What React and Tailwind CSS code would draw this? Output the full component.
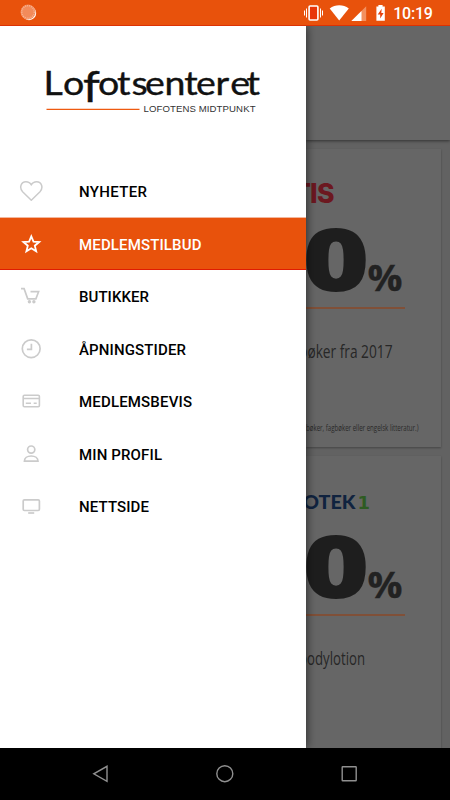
import React from "react";

function HeartIcon() {
  return (
    <svg width="24" height="24" viewBox="0 0 24 24" fill="none" stroke="#cbcbcb" strokeWidth="1.500" strokeLinejoin="round">
      <path d="M12.300 21.300 3.600 12.700C0 8.900 1.900 2.700 6.900 2.700c2.500 0 4.400 1.200 5.400 3.300 1-2.100 2.900-3.300 5.400-3.300 5 0 6.900 6.200 3.300 10Z" />
    </svg>
  );
}

function StarIcon() {
  return (
    <svg width="24" height="24" viewBox="0 0 24 24" fill="none" stroke="#fff" strokeWidth="1.800">
      <path d="m12.300 4.300 2.200 5.300 5.700.4-4.400 3.700 1.400 5.600-4.900-3-4.900 3 1.400-5.600-4.400-3.700 5.700-.4Z" />
    </svg>
  );
}

function CartIcon() {
  return (
    <svg width="24" height="24" viewBox="0 0 24 24" fill="none" stroke="#cbcbcb" strokeWidth="1.700">
      <path d="M2 4.600h3.100l3.600 10.300h8.200l2.700-7.200h-8.100" />
      <circle cx="10.400" cy="17.700" r="1.700" fill="#cbcbcb" stroke="none" />
      <circle cx="14.900" cy="17.700" r="1.700" fill="#cbcbcb" stroke="none" />
    </svg>
  );
}

function ClockIcon() {
  return (
    <svg width="24" height="24" viewBox="0 0 24 24" fill="none" stroke="#cbcbcb" strokeWidth="1.700">
      <circle cx="12.200" cy="11.700" r="8.900" />
      <path d="M12.400 6.800v5.500H7.900" />
    </svg>
  );
}

function CardIcon() {
  return (
    <svg width="24" height="24" viewBox="0 0 24 24" fill="none" stroke="#cbcbcb" strokeWidth="1.600">
      <rect x="4.200" y="6.200" width="16.200" height="11.600" rx="1.200" />
      <path d="M4.200 9.500h16.200M6.800 14.200h5.200M14.700 14.200h3" />
    </svg>
  );
}

function PersonIcon() {
  return (
    <svg width="24" height="24" viewBox="0 0 24 24" fill="none" stroke="#cbcbcb" strokeWidth="1.700">
      <circle cx="12.200" cy="7.600" r="3.600" />
      <path d="M5.400 19.200c0-3 2.900-5.200 6.800-5.200s6.800 2.200 6.800 5.200Z" />
    </svg>
  );
}

function ScreenIcon() {
  return (
    <svg width="24" height="24" viewBox="0 0 24 24" fill="none" stroke="#cbcbcb" strokeWidth="1.700">
      <rect x="4.200" y="5.900" width="16.200" height="10.600" rx="1.200" />
      <path d="M9.200 19h6" />
    </svg>
  );
}

const items = [
  { label: "NYHETER", width: 68, Icon: HeartIcon },
  { label: "MEDLEMSTILBUD", width: 122.5, Icon: StarIcon, active: true },
  { label: "BUTIKKER", width: 70, Icon: CartIcon },
  { label: "ÅPNINGSTIDER", width: 107, Icon: ClockIcon },
  { label: "MEDLEMSBEVIS", width: 113, Icon: CardIcon },
  { label: "MIN PROFIL", width: 83, Icon: PersonIcon },
  { label: "NETTSIDE", width: 70, Icon: ScreenIcon },
];

function StatusBar() {
  return (
    <header className="flex h-[26px] shrink-0 items-center border-b border-[#dc3204] bg-[#e8520c]">
      <svg className="ml-[20px]" width="17" height="17" viewBox="0 0 17 17">
        <circle cx="9" cy="9" r="7.200" fill="#fff" />
        <circle cx="8" cy="8" r="7.500" fill="#f28b5b" />
        <circle cx="8" cy="8" r="6.300" fill="none" stroke="#f7b394" strokeWidth="1.600" strokeDasharray="1 1" />
      </svg>
      <svg className="ml-auto" width="84" height="22" viewBox="303 2 84 22">
        <rect x="309.100" y="6" width="8.800" height="14" rx="1" fill="#e8350a" stroke="#fff" strokeWidth="1.600" />
        <path d="M304.500 10.500v5M306.500 8.500v9M320.500 8.500v9M322.500 10.500v5" stroke="#fff" strokeWidth="1" />
        <path d="M339.200 20.600 329.700 8.500c5.500-4.300 13.600-4.300 19.100 0Z" fill="#fff" />
        <path d="M366.200 6.200V21h-14.800Z" fill="#f3905f" />
        <path d="M361.500 10.900V21h-10.100Z" fill="#fff" />
        <path d="M376.400 6.600h2V5h4.200v1.600h2.200v14.200h-8.400Z" fill="#fff" />
        <path d="m381.700 8.800-4 5.600h2.500v4.200l3.400-5.500h-2.300Z" fill="#e8400a" />
      </svg>
      <svg className="mr-[16px] ml-[6px] font-[Roboto,sans-serif] text-[16px] font-medium" width="41" height="18">
        <text x="0.300" y="15.200" textLength="39.500" fill="#fff">10:19</text>
      </svg>
    </header>
  );
}

function Logo() {
  return (
    <svg className="ml-[42px] mt-[38px] block shrink-0" width="222" height="54" viewBox="42 64 222 54">
      <g transform="translate(42 0) scale(1.120 1)" fontFamily="Lato, sans-serif" fontSize="33.500" fill="#111" stroke="#111" strokeWidth="0.400">
        <text>
          <tspan x="1.300 18.800" y="95.500">Lo</tspan>
          <tspan x="36.600" y="102.500" fontSize="43">f</tspan>
          <tspan x="50 67 80 92 109.300 127 137.500 155 168 182.500" y="95.500">otsenteret</tspan>
        </text>
      </g>
      <path d="M46.500 109.300h93" stroke="#ee5a10" strokeWidth="1.300" />
      <text x="143.500" y="112" fontFamily="Liberation Sans, sans-serif" fontSize="9.600" fill="#333" textLength="112">
        LOFOTENS MIDTPUNKT
      </text>
    </svg>
  );
}

function Drawer() {
  return (
    <aside className="z-10 flex w-[306px] shrink-0 flex-col bg-white shadow-[1px_0_9px_rgba(0,0,0,0.55)]">
      <Logo />
      <nav className="mt-[47px] flex flex-col">
        {items.map(({ label, width, Icon, active }) => (
          <a
            key={label}
            className={
              active
                ? "flex h-[52.470px] items-center border-t border-b border-t-[#f3b79d] border-b-[#e01b02] bg-[#e8520c] pl-[18.500px] text-white"
                : "flex h-[52.470px] items-center pl-[18.500px] text-black"
            }
          >
            <Icon />
            <svg className="ml-[36.500px] font-[Roboto,sans-serif] text-[15px] font-medium" width="150" height="22">
              <text x="0" y="16.500" fill="currentColor" textLength={width}>{label}</text>
            </svg>
          </a>
        ))}
      </nav>
    </aside>
  );
}

function Discount() {
  return (
    <svg className="block" width="135" height="90" viewBox="306 222 135 90">
      <text transform="translate(302.300 291) scale(1.340 1)" fontFamily="Open Sans, sans-serif" fontWeight="800" fontSize="86" fill="#1e1e1e">0</text>
      <text x="367.500" y="290.500" fontFamily="Open Sans, sans-serif" fontWeight="700" fontSize="36" fill="#222" stroke="#222" strokeWidth="0.300" textLength="35" lengthAdjust="spacingAndGlyphs">%</text>
      <path d="M306 308h99" stroke="#8a4a2a" strokeWidth="1.500" />
    </svg>
  );
}

function Offers() {
  return (
    <main className="flex min-w-0 flex-1 flex-col overflow-hidden bg-[#626262]">
      <div className="h-[114px] shrink-0 bg-[#666] shadow-[0_1px_3px_rgba(0,0,0,0.5)]" />
      <section className="mt-[9px] mr-[9px] flex h-[298px] shrink-0 flex-col bg-[#666] shadow-[0_1px_2px_rgba(0,0,0,0.3)]">
        <svg className="mt-[31px] block" width="135" height="26" viewBox="306 180 135 26">
          <text x="293 310 317" y="202.500" fontFamily="Inter, sans-serif" fontWeight="800" fontSize="26.500" fill="#6c1820">TIS</text>
        </svg>
        <div className="mt-[16px]"><Discount /></div>
        <svg className="mt-[28px] block" width="135" height="26" viewBox="306 340 135 26">
          <text x="299" y="358" fontFamily="Open Sans, sans-serif" fontWeight="400" fontSize="17.500" fill="#272727" textLength="93.500" lengthAdjust="spacingAndGlyphs">bøker fra 2017</text>
        </svg>
        <svg className="mt-[54px] block" width="135" height="16" viewBox="306 420 135 16">
          <text x="306" y="431" fontFamily="Open Sans, sans-serif" fontSize="8.500" fill="#2a2a2a" textLength="112.500" lengthAdjust="spacingAndGlyphs">bøker, fagbøker eller engelsk litteratur.)</text>
        </svg>
      </section>
      <section className="mt-[9px] mr-[9px] flex flex-1 flex-col bg-[#666] shadow-[0_1px_2px_rgba(0,0,0,0.3)]">
        <svg className="mt-[34px] block" width="135" height="26" viewBox="306 490 135 26">
          <text x="303" y="509" fontFamily="Lato, sans-serif" fontWeight="900" fontSize="18.500" fill="#10233f" textLength="52.500" lengthAdjust="spacingAndGlyphs">OTEK</text>
          <text x="357.500" y="509" fontFamily="DejaVu Sans, sans-serif" fontWeight="700" fontSize="18.500" fill="#2e5b22" textLength="12.500" lengthAdjust="spacingAndGlyphs">1</text>
        </svg>
        <div className="mt-[13px]"><Discount /></div>
        <svg className="mt-[28px] block" width="135" height="30" viewBox="306 647 135 30">
          <text x="299" y="665" fontFamily="Open Sans, sans-serif" fontSize="17.500" fill="#272727" textLength="66" lengthAdjust="spacingAndGlyphs">bodylotion</text>
        </svg>
      </section>
    </main>
  );
}

function NavigationBar() {
  return (
    <footer className="flex h-[52px] shrink-0 items-center bg-black">
      <svg width="450" height="52" viewBox="0 748 450 52" fill="none" stroke="#909090" strokeWidth="1.400">
        <path d="M107 766.300v15L93.800 773.800Z" />
        <circle cx="224.800" cy="773.700" r="8" />
        <rect x="342.200" y="766.700" width="14" height="14" rx="0.500" />
      </svg>
    </footer>
  );
}

export default function App() {
  return (
    <div className="flex h-[800px] w-[450px] flex-col overflow-hidden bg-black">
      <StatusBar />
      <div className="flex h-[722px] shrink-0 overflow-hidden">
        <Drawer />
        <Offers />
      </div>
      <NavigationBar />
    </div>
  );
}
